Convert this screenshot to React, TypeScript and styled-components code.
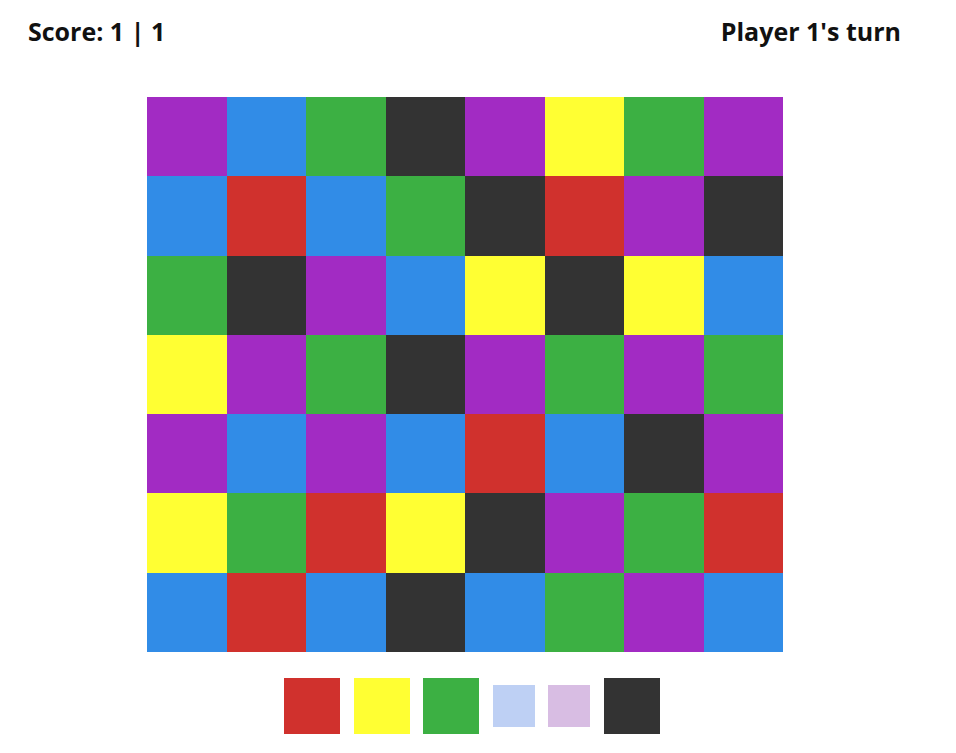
import React, {useState} from 'react';
import styled, {createGlobalStyle} from 'styled-components';

const COLORS: Record<string, string> = {
    r: '#d0312d',
    y: '#ffff33',
    g: '#3cb043',
    b: '#318ce7',
    p: '#a22bc3',
    k: '#333333',
};

const FADED: Record<string, string> = {
    b: '#bed0f4',
    p: '#d8bde3',
};

const BOARD = [
    'pbgkpygp',
    'brbgkrpk',
    'gkpbykyb',
    'ypgkpgpg',
    'pbpbrbkp',
    'ygrykpgr',
    'brbkbgpb',
];

const PALETTE = ['r', 'y', 'g', 'b', 'p', 'k'];

const GlobalStyle = createGlobalStyle`
    body {
        margin: 0;
        background: #fff;
        font-family: 'Open Sans', 'Noto Sans', sans-serif;
    }
`;

const Page = styled.div`
    width: 930px;
    display: flex;
    flex-direction: column;
    align-items: center;
`;

const Header = styled.div`
    align-self: stretch;
    height: 62px;
    display: flex;
    align-items: center;
    justify-content: space-between;
    padding: 0 29px 0 28px;
    font-size: 25px;
    font-weight: 700;
    color: #111;
`;

const Board = styled.div`
    margin-top: 35px;
    width: 636px;
    height: 555px;
    display: grid;
    grid-template-columns: repeat(8, 1fr);
    grid-template-rows: repeat(7, 1fr);
`;

const Cell = styled.div<{$color: string}>`
    background: ${(p) => p.$color};
`;

const Palette = styled.div`
    margin-top: 26px;
    display: flex;
    align-items: center;
    padding-left: 14px;
    gap: 13.6px;
`;

const Swatch = styled.button<{$color: string; $disabled: boolean}>`
    border: none;
    padding: 0;
    width: ${(p) => (p.$disabled ? 42 : 56)}px;
    height: ${(p) => (p.$disabled ? 42 : 56)}px;
    background: ${(p) => p.$color};
    cursor: ${(p) => (p.$disabled ? 'default' : 'pointer')};
`;

export default function App() {
    const [turn] = useState(1);
    const disabled = ['b', 'p'];

    return (
        <Page>
            <GlobalStyle/>
            <Header>
                <span>{'Score: 1 | 1'}</span>
                <span>{`Player ${turn}'s turn`}</span>
            </Header>
            <Board>
                {BOARD.map((row, i) => row.split('').map((c, j) => (
                    <Cell
                        key={`${i}-${j}`}
                        $color={COLORS[c]}
                    />
                )))}
            </Board>
            <Palette>
                {PALETTE.map((c) => {
                    const off = disabled.includes(c);
                    return (
                        <Swatch
                            key={c}
                            type='button'
                            $disabled={off}
                            $color={off ? FADED[c] : COLORS[c]}
                        />
                    );
                })}
            </Palette>
        </Page>
    );
}
